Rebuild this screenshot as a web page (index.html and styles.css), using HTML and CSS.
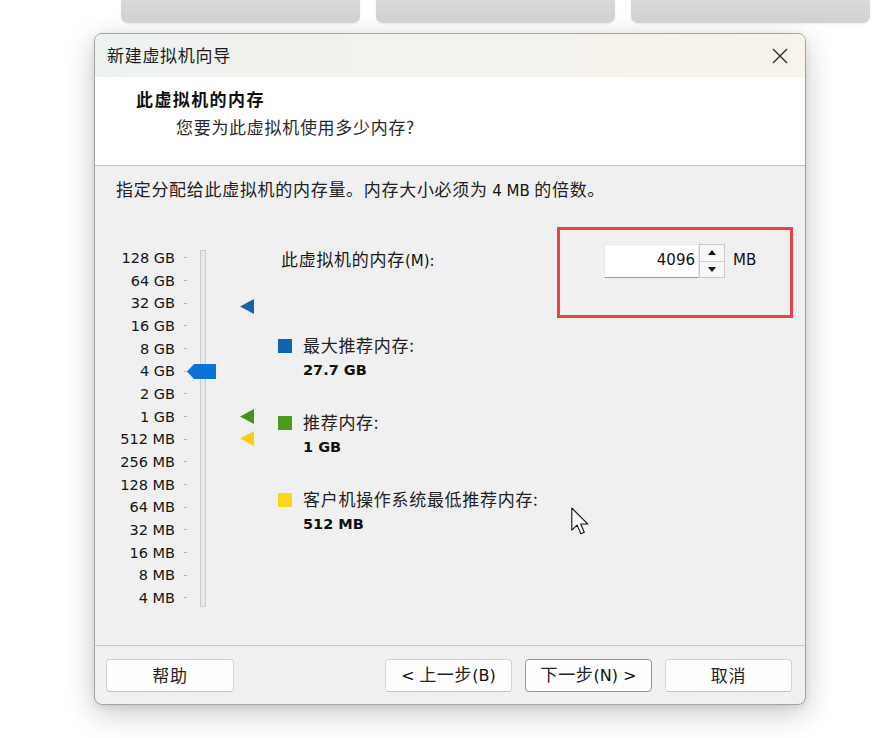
FILE: index.html
```html
<!DOCTYPE html>
<html lang="zh-CN">
<head>
<meta charset="utf-8">
<title>新建虚拟机向导</title>
<link rel="stylesheet" href="styles.css">
</head>
<body>
<div class="tabs">
  <div class="tab"></div>
  <div class="tab"></div>
  <div class="tab"></div>
</div>
<div class="dialog">
  <div class="titlebar">
    <span class="title">新建虚拟机向导</span>
    <svg class="close" width="16" height="16" viewBox="0 0 16 16"><path d="M1 1 L15 15 M15 1 L1 15" stroke="#2b2b2b" stroke-width="1.4" fill="none"/></svg>
  </div>
  <div class="header">
    <div class="h-title">此虚拟机的内存</div>
    <div class="h-sub">您要为此虚拟机使用多少内存?</div>
  </div>
  <div class="body">
    <p class="intro">指定分配给此虚拟机的内存量。内存大小必须为 <span class="en">4 MB</span> 的倍数。</p>
    <div class="main">
      <div class="scale">
        <div class="labels">
          <div class="row"><span class="en">128 GB</span><i class="tick"></i></div>
          <div class="row"><span class="en">64 GB</span><i class="tick"></i></div>
          <div class="row"><span class="en">32 GB</span><i class="tick"></i></div>
          <div class="row"><span class="en">16 GB</span><i class="tick"></i></div>
          <div class="row"><span class="en">8 GB</span><i class="tick"></i></div>
          <div class="row"><span class="en">4 GB</span><i class="tick"></i></div>
          <div class="row"><span class="en">2 GB</span><i class="tick"></i></div>
          <div class="row"><span class="en">1 GB</span><i class="tick"></i></div>
          <div class="row"><span class="en">512 MB</span><i class="tick"></i></div>
          <div class="row"><span class="en">256 MB</span><i class="tick"></i></div>
          <div class="row"><span class="en">128 MB</span><i class="tick"></i></div>
          <div class="row"><span class="en">64 MB</span><i class="tick"></i></div>
          <div class="row"><span class="en">32 MB</span><i class="tick"></i></div>
          <div class="row"><span class="en">16 MB</span><i class="tick"></i></div>
          <div class="row"><span class="en">8 MB</span><i class="tick"></i></div>
          <div class="row"><span class="en">4 MB</span><i class="tick"></i></div>
        </div>
        <div class="track"></div>
        <div class="thumb"></div>
        <div class="mark mark-max"></div>
        <div class="mark mark-rec"></div>
        <div class="mark mark-min"></div>
      </div>
      <div class="panel">
        <div class="mem-row">
          <span class="mem-label">此虚拟机的内存<span class="en">(M):</span></span>
          <div class="spin">
            <div class="spin-input en">4096</div>
            <div class="spin-btns">
              <div class="spin-btn"><i class="arrow-up"></i></div>
              <div class="spin-btn"><i class="arrow-down"></i></div>
            </div>
          </div>
          <span class="en unit">MB</span>
        </div>
        <div class="legend">
          <div class="item">
            <i class="sq sq-max"></i>
            <div class="item-text">
              <div class="item-label">最大推荐内存:</div>
              <div class="en val">27.7 GB</div>
            </div>
          </div>
          <div class="item">
            <i class="sq sq-rec"></i>
            <div class="item-text">
              <div class="item-label">推荐内存:</div>
              <div class="en val">1 GB</div>
            </div>
          </div>
          <div class="item">
            <i class="sq sq-min"></i>
            <div class="item-text">
              <div class="item-label">客户机操作系统最低推荐内存:</div>
              <div class="en val">512 MB</div>
            </div>
          </div>
        </div>
        <div class="highlight"></div>
        <svg class="cursor" width="18" height="28" viewBox="0 0 13 20"><path d="M0.6 0.6 V16.6 L4.4 13 L7.1 19.2 L9.6 18.1 L7 12.2 L12.2 12.2 Z" fill="#fff" stroke="#111" stroke-width="0.8" stroke-linejoin="round"/></svg>
      </div>
    </div>
  </div>
  <div class="footer">
    <button class="btn btn-help">帮助</button>
    <div class="btn-group">
      <button class="btn"><span class="en">&lt;</span> 上一步<span class="en">(B)</span></button>
      <button class="btn btn-focus">下一步<span class="en">(N) &gt;</span></button>
      <button class="btn">取消</button>
    </div>
  </div>
</div>
</body>
</html>
```

FILE: styles.css
```css
* { box-sizing: border-box; }

html, body {
  margin: 0;
  padding: 0;
  background: #ffffff;
}

body {
  width: 888px;
  height: 738px;
  overflow: hidden;
  font-family: "Noto Sans CJK SC", "DejaVu Sans", sans-serif;
  font-size: 17px;
  letter-spacing: 0.7px;
  color: #1a1a1a;
}

.en {
  font-family: "DejaVu Sans", "Noto Sans CJK SC", sans-serif;
  font-size: 15px;
  letter-spacing: 0;
  color: #111;
}

.tabs {
  display: flex;
  gap: 16px;
  padding-left: 121px;
}

.tab {
  width: 239px;
  height: 23px;
  border-radius: 0 0 7px 7px;
  background: linear-gradient(#d9d9d9, #d1d1d1);
  box-shadow: 0 1px 2px rgba(0,0,0,0.08);
}

.dialog {
  margin: 10px 0 0 94px;
  width: 712px;
  height: 672px;
  border: 1px solid #a3a3a3;
  border-radius: 8px;
  background: #f0f0f0;
  box-shadow: 0 8px 30px rgba(0,0,0,0.22), 0 2px 6px rgba(0,0,0,0.08);
  display: flex;
  flex-direction: column;
  overflow: hidden;
}

.titlebar {
  height: 43px;
  flex: none;
  display: flex;
  align-items: center;
  justify-content: space-between;
  padding: 0 17px 3px 12px;
  background: linear-gradient(90deg, #eef2ee 0%, #f3f2ee 50%, #f8f3eb 100%);
}

.title {
  color: #1c1c1c;
  line-height: 23px;
}

.close { display: block; margin-top: 3px; }

.header {
  height: 89px;
  flex: none;
  background: #ffffff;
  border-bottom: 1px solid #c2c2c2;
  padding: 10px 0 0 41px;
}

.h-title {
  font-weight: bold;
  line-height: 23px;
  letter-spacing: 1.4px;
  color: #111;
}

.h-sub {
  margin: 5px 0 0 40px;
  line-height: 23px;
  color: #2a2a2a;
}

.body {
  flex: 1;
  display: flex;
  flex-direction: column;
}

.intro {
  margin: 0;
  padding: 11px 0 0 21px;
  line-height: 24px;
  color: #222;
}

.main {
  margin-top: 24px;
  display: flex;
  flex: 1;
}

.scale {
  position: relative;
  width: 175px;
  flex: none;
  display: flex;
  align-items: flex-start;
}

.labels {
  width: 92px;
  padding-top: 19.67px;
}

.row {
  height: 22.67px;
  display: flex;
  align-items: center;
  justify-content: flex-end;
}

.row .en {
  font-size: 14.5px;
  color: #151515;
}

.tick {
  width: 3px;
  height: 1px;
  margin-left: 9px;
  background: #b5b5b5;
}

.track {
  margin: 23px 0 0 13px;
  width: 6px;
  height: 357px;
  background: #e8e8e8;
  border: 1px solid #cdcdcd;
}

.thumb {
  position: absolute;
  left: 92px;
  top: 137px;
  width: 29px;
  height: 15px;
  background: #0b72d6;
  clip-path: polygon(0 50%, 7px 0, 100% 0, 100% 100%, 7px 100%);
}

.mark {
  position: absolute;
  left: 145px;
  width: 14px;
  height: 15px;
  clip-path: polygon(0 50%, 100% 0, 100% 100%);
}

.mark-max { top: 72px; background: #1462aa; }
.mark-rec { top: 182px; background: #4a8f1d; }
.mark-min { top: 204px; background: #f6d10e; }

.panel {
  position: relative;
  flex: 1;
  padding-left: 8px;
}

.mem-row {
  margin-top: 17px;
  height: 34px;
  display: flex;
  align-items: center;
}

.mem-label {
  width: 326px;
  padding-left: 3px;
  padding-bottom: 3px;
  line-height: 23px;
}

.spin {
  display: flex;
  width: 121px;
  height: 34px;
}

.spin-input {
  width: 95px;
  height: 34px;
  background: #ffffff;
  border: 1px solid #e6e6e6;
  border-bottom: 1px solid #9c9c9c;
  text-align: right;
  padding-right: 3px;
  line-height: 30px;
  color: #111;
}

.spin-btns {
  width: 26px;
  display: flex;
  flex-direction: column;
  border: 1px solid #c9c9c9;
  background: #f7f7f7;
}

.spin-btn {
  flex: 1;
  display: flex;
  align-items: center;
  justify-content: center;
}

.spin-btn + .spin-btn { border-top: 1px solid #cfcfcf; }

.arrow-up, .arrow-down {
  width: 0;
  height: 0;
  border-left: 4.5px solid transparent;
  border-right: 4.5px solid transparent;
}

.arrow-up { border-bottom: 5px solid #111; }
.arrow-down { border-top: 5px solid #111; }

.unit {
  margin-left: 8px;
  margin-bottom: 2px;
}

.legend {
  margin-top: 55px;
  display: flex;
  flex-direction: column;
  gap: 31px;
}

.item {
  display: flex;
  align-items: flex-start;
}

.sq {
  width: 14px;
  height: 14px;
  margin: 6px 11px 0 0;
  flex: none;
}

.sq-max { background: #1063ad; }
.sq-rec { background: #4c9a1e; }
.sq-min { background: #f9d71c; }

.item-label {
  line-height: 23px;
  color: #222;
}

.val {
  height: 23px;
  line-height: 28px;
  font-weight: bold;
  font-size: 14.5px;
}

.highlight {
  position: absolute;
  left: 287px;
  top: 0;
  width: 236px;
  height: 91px;
  border: 3px solid #e94343;
}

.cursor {
  position: absolute;
  left: 301px;
  top: 280px;
}

.footer {
  height: 59px;
  flex: none;
  border-top: 1px solid #c8c8c8;
  display: flex;
  justify-content: space-between;
  align-items: flex-start;
  padding: 13px 13px 0 11px;
}

.btn-group {
  display: flex;
  gap: 13px;
}

.btn {
  width: 127px;
  height: 33px;
  background: #fdfdfd;
  border: 1px solid #d3d3d3;
  border-bottom-color: #c2c2c2;
  border-radius: 4px;
  font-family: "Noto Sans CJK SC", "DejaVu Sans", sans-serif;
  font-size: 17px;
  letter-spacing: 0.7px;
  color: #222;
  padding: 0 0 2px;
  line-height: 23px;
}

.btn .en { font-size: 16px; }

.btn-help { width: 128px; }

.btn-focus {
  border: 1px solid #6e9cc6;
}
```
